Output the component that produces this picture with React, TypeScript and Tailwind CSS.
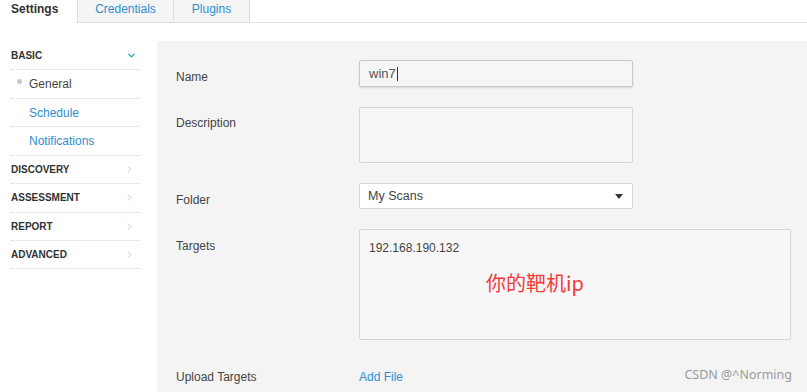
import { ChevronDown, ChevronRight } from 'lucide-react'

const sections = [
  { label: 'BASIC', open: true },
  { label: 'DISCOVERY' },
  { label: 'ASSESSMENT' },
  { label: 'REPORT' },
  { label: 'ADVANCED' },
]

const basicItems = [
  { label: 'General', active: true },
  { label: 'Schedule' },
  { label: 'Notifications' },
]

function Row({ children }: { children: React.ReactNode }) {
  return (
    <div className="h-[28.43px] flex items-center border-b border-dotted border-[#d4d4d4]">{children}</div>
  )
}

function Sidebar() {
  return (
    <aside className="w-[128px] ml-[11px] mr-[18px] pt-[1px] flex-shrink-0">
      {sections.map(({ label, open }) => (
        <div key={label}>
          <Row>
            <span className="flex-1 text-[10px] font-bold text-[#333]">{label}</span>
            {open ? (
              <ChevronDown className="w-[11px] h-[11px] mr-[2px] text-[#2aa0c0]" strokeWidth={3} />
            ) : (
              <ChevronRight className="w-[11px] h-[11px] mr-[4px] text-[#c4c4c4]" strokeWidth={2} />
            )}
          </Row>
          {open &&
            basicItems.map(({ label, active }) => (
              <Row key={label}>
                {active ? (
                  <>
                    <span className="w-[5px] h-[5px] rounded-full bg-[#c8c8c8] ml-[6px] mr-[7px] -mt-[6px]" />
                    <span className="text-[12px] text-[#444]">{label}</span>
                  </>
                ) : (
                  <span className="text-[12px] text-[#2b8fd0] ml-[18px]">{label}</span>
                )}
              </Row>
            ))}
        </div>
      ))}
    </aside>
  )
}

function Field({ label, children, top = 'pt-[9px]' }: { label: string; children: React.ReactNode; top?: string }) {
  return (
    <div className="flex">
      <div className={`w-[183px] flex-shrink-0 text-[12px] leading-4 text-[#444] ${top}`}>{label}</div>
      {children}
    </div>
  )
}

export default function App() {
  return (
    <div className="w-[807px] h-[392px] overflow-hidden bg-white relative" style={{ fontFamily: '"Liberation Sans", Arial, sans-serif' }}>
      {/* Tabs */}
      <div className="flex h-[23px] text-[12px] leading-[14px]">
        <div className="w-[77px] pl-[11px] pt-[2px] font-bold text-[#333] bg-white">Settings</div>
        <div className="w-[96px] flex justify-center pt-[2px] text-[#2b8fd0] bg-[#f5f5f5] border-l border-b border-[#dcdcdc]">Credentials</div>
        <div className="w-[77px] flex justify-center pt-[2px] text-[#2b8fd0] bg-[#f5f5f5] border-l border-r border-b border-[#dcdcdc]">Plugins</div>
        <div className="flex-1 border-b border-[#e4e4e4]" />
      </div>

      <div className="flex mt-[18px]">
        <Sidebar />

        {/* Form panel */}
        <div className="flex-1 h-[351px] bg-[#f4f4f4] pt-[19px] pl-[19px] flex flex-col">
          <Field label="Name">
            <div className="w-[274px] h-[27px] border border-[#c9c9c9] rounded-[2px] bg-[#f6f6f6] shadow-[0_1px_2px_rgba(0,0,0,0.12)] flex items-center pl-[9px] text-[13px] text-[#555]">
              win7<span className="w-px h-[14px] bg-[#333] ml-px" />
            </div>
          </Field>
          <div className="mt-[20px]">
            <Field label="Description" top="pt-[8px]">
              <div className="w-[274px] h-[56px] border border-[#d6d6d6] rounded-[2px] bg-[#f6f6f6]" />
            </Field>
          </div>
          <div className="mt-[20px]">
            <Field label="Folder">
              <div className="w-[274px] h-[26px] border border-[#d6d6d6] rounded-[2px] bg-white flex items-center pl-[8px] pr-[9px] text-[12.5px] text-[#444]">
                <span className="flex-1">My Scans</span>
                <span className="w-0 h-0 border-l-[4px] border-r-[4px] border-t-[5px] border-l-transparent border-r-transparent border-t-[#333]" />
              </div>
            </Field>
          </div>
          <div className="mt-[20px]">
            <Field label="Targets">
              <div className="w-[432px] h-[111px] border border-[#d6d6d6] rounded-[2px] bg-[#f7f7f7] pt-[9px] pl-[9px] text-[12px] text-[#444] relative">
                192.168.190.132
                <span
                  className="absolute left-[126px] top-[39px] text-[20px] leading-[28px] text-[#f23a3a]"
                  style={{ fontFamily: '"Noto Sans CJK SC", "Liberation Sans", sans-serif' }}
                >
                  你的靶机ip
                </span>
              </div>
            </Field>
          </div>
          <div className="mt-[20px]">
            <Field label="Upload Targets">
              <div className="text-[12px] leading-4 pt-[9px] text-[#2b8fd0]">Add File</div>
            </Field>
          </div>
        </div>
      </div>

      {/* watermark */}
      <span className="absolute right-[15px] top-[366px] text-[12.5px] text-[#9a9a9a]" style={{ fontFamily: '"Noto Sans", sans-serif' }}>
        CSDN @^Norming
      </span>
    </div>
  )
}
